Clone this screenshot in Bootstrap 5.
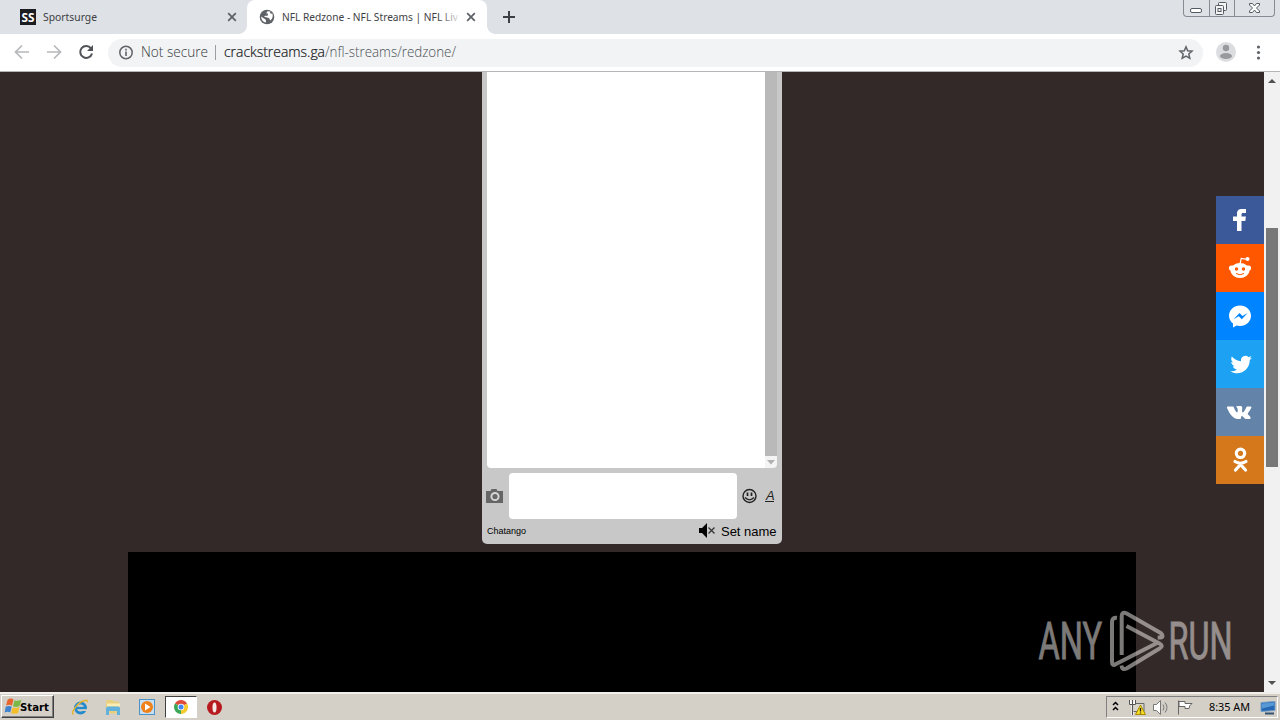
<!DOCTYPE html>
<html lang="en">
<head>
  <meta charset="UTF-8">
  <title>NFL Redzone - NFL Streams</title>
  <meta name="viewport" content="width=device-width, initial-scale=1">
  <link href="https://cdn.jsdelivr.net/npm/bootstrap@5.3.0/dist/css/bootstrap.min.css" rel="stylesheet">
  <style>
    body { width: 1280px; height: 720px; font-family: "DejaVu Sans Condensed", "DejaVu Sans", sans-serif; font-size: 11px; line-height: 1; color: #000; }
    svg { display: block; flex: none; overflow: visible; }
    svg text { white-space: pre; }

    /* browser chrome */
    .tab-strip { height: 34px; background: #dee1e6; }
    .tab-item { height: 34px; color: #3c4043; }
    .tab-first { width: 247px; padding-left: 20px; padding-right: 10px; }
    .tab-active { width: 240px; background: #fff; border-radius: 8px 8px 0 0; padding-left: 12px; padding-right: 11px; }
    .tab-active::before, .tab-active::after { content: ""; position: absolute; bottom: 0; width: 8px; height: 8px; }
    .tab-active::before { left: -8px; background: radial-gradient(circle at 0 0, transparent 7.5px, #fff 8px); }
    .tab-active::after { right: -8px; background: radial-gradient(circle at 100% 0, transparent 7.5px, #fff 8px); }
    .win-buttons { width: 92px; height: 17px; margin-right: 5px; border: 1px solid #868b93; border-top: 0; border-radius: 0 0 4px 4px; }
    .win-buttons > div + div { border-left: 1px solid #868b93; }
    .toolbar { height: 38px; background: #fff; border-bottom: 1px solid #b5b5b7; }
    .omnibox { width: 1095px; height: 28px; background: #f1f3f4; margin-left: 14px; padding-left: 11px; padding-right: 9px; }

    /* page */
    .viewport { height: 620px; background: #322928; }
    .page-area { width: 1264px; }
    .chat-box { width: 300px; height: 472px; background: #c8c8c8; border-radius: 0 0 5px 5px; padding: 0 5px; }
    .chat-log { height: 396px; background: #fff; border-radius: 0 0 4px 4px; }
    .chat-track { width: 12px; background: #b9b9b9; }
    .chat-down { height: 12px; background: #f4f4f4; border-radius: 0 0 3px 0; }
    .chat-entry { margin: 5px -1px 0; }
    .chat-input { width: 228px; height: 46px; background: #fff; border-radius: 4px; margin-left: 5px; flex: none; }
    .player { width: 1008px; height: 140px; margin-top: 8px; background: #000; }
    .share-bar { top: 124px; right: 0; width: 48px; }
    .share-bar > div { height: 48px; }
    .bg-fb { background: #3b5998; }
    .bg-reddit { background: #ff5700; }
    .bg-msgr { background: #0084ff; }
    .bg-tw { background: #1da1f2; }
    .bg-vk { background: #6383a8; }
    .bg-ok { background: #d4781b; }
    .watermark { left: 1030px; top: 532px; opacity: .5; }
    .scroll-col { width: 16px; background: #f1f1f1; }
    .scroll-thumb { width: 12px; height: 239px; background: #787878; margin-left: 2px; }

    /* taskbar */
    .taskbar { height: 28px; background: #d4d0c8; box-shadow: inset 0 2px #f1efea; padding: 3px 2px 0 1px; }
    .start-btn { width: 53px; height: 23px; border: 1px solid; border-color: #fff #404040 #404040 #fff; box-shadow: inset -1px -1px #808080; padding-left: 2px; }
    .task-active { width: 32px; height: 22px; margin-top: 1px; background: #fff; border: 1px solid; border-color: #404040 #fff #fff #404040; }
    .tray { width: 172px; height: 22px; margin-top: 1px; border: 1px solid; border-color: #808080 #fff #fff #808080; }
  </style>
</head>
<body class="d-flex flex-column overflow-hidden">

<!-- Tabs -->
<div class="tab-strip d-flex align-items-start">
  <div class="tab-item tab-first d-flex align-items-center">
    <svg width="16" height="16"><rect width="16" height="16" fill="#1c1d20"/><text x="1.5" y="12.5" font-family="Open Sans, sans-serif" font-weight="700" font-size="12" fill="#fff" textLength="13" lengthAdjust="spacingAndGlyphs">SS</text></svg>
    <svg class="ms-2" width="70" height="16"><text x="-1" y="12" font-family="Noto Sans, sans-serif" font-size="11.5" fill="#3c4043" textLength="54" lengthAdjust="spacingAndGlyphs">Sportsurge</text></svg>
    <svg class="ms-auto" width="10" height="10"><path d="M1.2 1.2l7.6 7.6M8.8 1.2L1.2 8.8" stroke="#5f6368" stroke-width="1.8"/></svg>
  </div>
  <div class="tab-item tab-active position-relative d-flex align-items-center">
    <svg width="16" height="16" viewBox="0 0 16 16"><circle cx="8" cy="8" r="7.3" fill="#5f6368"/><path d="M2 7.5l4.8 3.2.2 2.9C4.2 13.2 2.2 11 2 7.5zM8.5 2.2l-1.3 2 1.8.6-.3 2H6l-.8 1.2 2.3.2 2.6 1.1 1.2 2.3c2.3-1.7 3.1-4.6 2-7-1 .3-1.8-.2-2.3-.9l.4-1.1z" fill="#fff"/></svg>
    <svg class="ms-2" width="179" height="16">
      <defs><linearGradient id="fade" gradientUnits="userSpaceOnUse" x1="157" x2="179" y1="0" y2="0"><stop stop-color="#3c4043"/><stop offset="1" stop-color="#3c4043" stop-opacity="0"/></linearGradient></defs>
      <text x="-1" y="12" font-family="Noto Sans, sans-serif" font-size="11.5" fill="url(#fade)" textLength="176" lengthAdjust="spacingAndGlyphs">NFL Redzone - NFL Streams | NFL Liv</text>
    </svg>
    <svg class="ms-auto" width="10" height="10"><path d="M1.2 1.2l7.6 7.6M8.8 1.2L1.2 8.8" stroke="#5f6368" stroke-width="1.8"/></svg>
  </div>
  <svg class="ms-3 mt-2" width="13" height="18"><path d="M6 3v12M0 9h12" stroke="#3c4043" stroke-width="2"/></svg>
  <div class="win-buttons d-flex ms-auto">
    <div style="width:25px"><svg width="24" height="16"><rect x="6.5" y="8.5" width="11" height="4" rx="1.5" fill="#fff" stroke="#555b64"/></svg></div>
    <div style="width:25px"><svg width="24" height="16" fill="#f4f4f5" stroke="#555b64"><rect x="8.5" y="2.5" width="8" height="8" rx="1"/><rect x="5.500" y="5.500" width="8" height="9" rx="1"/><rect x="8" y="8.500" width="3" height="3"/></svg></div>
    <div class="flex-fill"><svg width="39" height="16"><path d="M14.500 3.500h3l2 2.500 2-2.500h3v1.500L21.500 8l3 3v1.500h-3l-2-2.500-2 2.500h-3V11l3-3-3-3z" fill="#fff" stroke="#555b64"/></svg></div>
  </div>
</div>

<!-- Address bar -->
<div class="toolbar d-flex align-items-center">
  <svg width="94" height="37" fill="none" stroke-width="1.700">
    <path d="M29 18H16M22 11.500L15.500 18l6.500 6.500M47 18h13M54 11.500l6.500 6.500-6.500 6.500" stroke="#b6b8ba"/>
    <path d="M91 14.300A6 6 0 1 0 92 19.500" stroke="#4f5357" stroke-width="2"/><path d="M93 11v6h-6z" fill="#4f5357"/>
  </svg>
  <div class="omnibox rounded-pill d-flex align-items-center justify-content-between">
    <svg width="350" height="28">
      <circle cx="7" cy="13.500" r="6.200" fill="none" stroke="#5f6368" stroke-width="1.500"/><path d="M7 9.700v1.700M7 12.500v4.500" stroke="#5f6368" stroke-width="1.600"/>
      <g font-family="Open Sans, sans-serif" font-size="14" font-weight="300">
        <text x="22" y="18" fill="#35393d" textLength="67" lengthAdjust="spacingAndGlyphs">Not secure</text>
        <path d="M96.500 6v15" stroke="#9a9da1"/>
        <text x="105" y="18" fill="#101113" stroke="#202124" stroke-width=".2" textLength="101" lengthAdjust="spacingAndGlyphs">crackstreams.ga</text>
        <text x="206" y="18" fill="#4c5055" textLength="131" lengthAdjust="spacingAndGlyphs">/nfl-streams/redzone/</text>
      </g>
    </svg>
    <svg width="16" height="16"><path d="M8 1.800l1.700 4 4.300.4L10.800 9l1 4.300L8 11.100l-3.800 2.200 1-4.300L2 6.200l4.300-.4z" fill="none" stroke="#5f6368" stroke-width="1.500"/></svg>
  </div>
  <svg class="ms-auto" width="66" height="37"><circle cx="12" cy="18" r="10" fill="#dcdde0"/><circle cx="12" cy="14" r="3.200" fill="#97999c"/><ellipse cx="12" cy="22" rx="6" ry="3" fill="#97999c"/><g fill="#5f6368"><circle cx="44.500" cy="13" r="1.600"/><circle cx="44.500" cy="18.500" r="1.600"/><circle cx="44.500" cy="24" r="1.600"/></g></svg>
</div>

<div class="viewport d-flex position-relative">
  <div class="page-area position-relative d-flex flex-column align-items-center">
    <!-- Chat -->
    <div class="chat-box">
      <div class="chat-log d-flex justify-content-end overflow-hidden">
        <div class="chat-track d-flex flex-column justify-content-end"><div class="chat-down"><svg width="12" height="12"><path d="M2 4h8l-4 4.500z" fill="#b0b0b0"/></svg></div></div>
      </div>
      <div class="chat-entry d-flex align-items-center">
        <svg width="18" height="16"><path d="M0 3h4.500l1-2h5l1 2H17v12H0z" fill="#666"/><circle cx="9" cy="8.500" r="3.600" fill="#666" stroke="#d4d4d4" stroke-width="2"/></svg>
        <div class="chat-input"></div>
        <svg width="41" height="20"><circle cx="12.500" cy="10" r="6.500" fill="none" stroke="#222" stroke-width="1.400"/><path d="M10.500 6.500v3.500M14.500 6.500v3.500" stroke="#222" stroke-width="1.700"/><path d="M8 11.500q4.500 4.500 9 0" fill="none" stroke="#222" stroke-width="1.200"/><text x="29" y="14" font-family="Liberation Sans, sans-serif" font-style="italic" font-size="13" fill="#222">A</text><path d="M28 15.500h9" stroke="#222"/></svg>
      </div>
      <svg width="292" height="24" font-family="Liberation Sans, sans-serif">
        <text x="0" y="15" font-size="9" textLength="39">Chatango</text>
        <path d="M212 9h3l5-5v15l-5-5h-3z"/><path d="M221.500 8.500l6 6M227.500 8.500l-6 6" stroke="#333" stroke-width="1.300"/>
        <text x="234" y="17" font-size="13" textLength="55.500">Set name</text>
      </svg>
    </div>
    <div class="player"></div>

    <!-- Share buttons -->
    <div class="share-bar position-absolute">
      <div class="bg-fb"><svg width="48" height="48"><path d="M21 35v-10h-4v-4.500h4v-2.700c0-3.500 2-4.800 5-4.800h4v4h-2.800c-1.200 0-1.700.6-1.700 1.700v1.800h4.400l-.6 4.500h-3.800v10z" fill="#fff"/></svg></div>
      <div class="bg-reddit"><svg width="48" height="48"><g fill="#fff"><ellipse cx="24" cy="26.500" rx="9.500" ry="7.500"/><circle cx="15.500" cy="24" r="2.600"/><circle cx="32.500" cy="24" r="2.600"/><circle cx="31.500" cy="15" r="2"/></g><path d="M24 20l1.200-5.500 6 .8" fill="none" stroke="#fff" stroke-width="1.200"/><circle cx="20.500" cy="25" r="1.700" fill="#ff5700"/><circle cx="27.500" cy="25" r="1.700" fill="#ff5700"/><path d="M20 29.500q4 2.500 8 0" stroke="#ff5700" fill="none"/></svg></div>
      <div class="bg-msgr"><svg width="48" height="48"><path d="M24 13.500c-6.200 0-11 4.500-11 10.300 0 3 1.500 5.800 4 7.800v4l3.700-2c1 .3 2.200.4 3.300.4 6.200 0 11-4.500 11-10.200S30.200 13.500 24 13.500z" fill="#fff"/><path d="M17.500 27.300l6-6.300 3 3 5.200-3-5.900 6.200-3-3z" fill="#0084ff"/></svg></div>
      <div class="bg-tw"><svg width="48" height="48"><path transform="translate(14 13.500) scale(.93)" d="M23.600 4.600c-.8.4-1.700.6-2.600.7 1-.6 1.700-1.500 2-2.500-.9.5-1.900.9-3 1.100A4.800 4.800 0 0 0 11.900 8.200C7.900 8 4.400 6.100 2 3.200c-1.300 2.200-.7 5 1.500 6.400-.8 0-1.500-.2-2.200-.6 0 2.300 1.600 4.300 3.800 4.700-.7.200-1.400.2-2.100.1.600 1.900 2.400 3.200 4.400 3.300A9.600 9.600 0 0 1 .4 19c9.200 5.900 21.100-.6 20.800-11.900 1-.7 1.800-1.500 2.400-2.500z" fill="#fff"/></svg></div>
      <div class="bg-vk"><svg width="48" height="48"><path d="M12.500 18.500h4c1 0 1.200.5 1.500 1.200 1 2.600 2.600 5.300 3.300 4.600.7-.6.500-3.800-.1-4.500-.3-.4-.8-.6-1.300-.7.600-1.100 2.400-1.200 4.500-1.100 2 .1 1.800.9 1.800 2.500-.1 1.500-.4 4 .5 4 1.200 0 2.800-3.500 3.600-5.200.3-.6.500-.8 1.200-.8h3c2.300 0-.2 3.300-2.400 6.500-.6.800-.4 1.200.2 1.800 2.400 2.200 3.400 4.200 1.200 4.200h-3.600c-1.600 0-2.700-3.100-4.100-3.100-.9 0-.5 1.500-.9 2.500-.3.700-1.500.8-3.300.6-4.500-.4-7.700-4.500-10.600-11-.3-.8-.1-1.500 1.500-1.500z" fill="#fff"/></svg></div>
      <div class="bg-ok"><svg width="48" height="48"><g fill="none" stroke="#fff" stroke-width="3.200" stroke-linecap="round"><circle cx="24.500" cy="17.300" r="4.200"/><path d="M19 25.500q5.500 3.500 11 0M24.500 28.500l-5 5.500M24.500 28.500l5 5.500"/></g></svg></div>
    </div>

    <!-- Watermark -->
    <svg class="watermark position-absolute" width="226" height="84" viewBox="1030 604 226 84">
      <g font-family="Roboto, sans-serif" font-size="51" fill="#f8f3ef" stroke="#f8f3ef" stroke-width=".8">
        <text x="1038.500" y="659" textLength="63.500" lengthAdjust="spacingAndGlyphs">ANY</text>
        <text x="1168.500" y="659" textLength="64" lengthAdjust="spacingAndGlyphs">RUN</text>
      </g>
      <g fill="none" stroke="#f8f3ef" stroke-width="4" stroke-linejoin="round">
        <path d="M1117 617.800q-5-.5-5 4.200v40q0 4.500 4 2l42-21.500"/>
        <path d="M1121.700 655v-38.500q0-5.500 5-3l34 19.500q3.500 3.500 0 4.500h-3"/>
        <path d="M1126.500 626l33 17.500q4.500 2.500 0 5l-33 20q-4.500 2-5-3"/>
      </g>
    </svg>
  </div>

  <div class="scroll-col d-flex flex-column">
    <svg width="16" height="156"><path d="M4 11h8L8 7z" fill="#505050"/></svg>
    <div class="scroll-thumb"></div>
    <svg class="mt-auto" width="16" height="17"><path d="M4 6h8l-4 4z" fill="#505050"/></svg>
  </div>
</div>

<!-- Taskbar -->
<div class="taskbar d-flex align-items-start">
  <div class="start-btn d-flex align-items-center">
    <svg width="50" height="20">
      <path d="M3.500 3q3-2.500 6-.5L8 8.500q-2.700-1.500-5.900 0z" fill="#e8642c"/><path d="M10.500 3.200q3 1.500 7-.5L15.500 9q-3 2-6.500.3z" fill="#7cb845"/><path d="M1.700 9.800q3-1.500 6-.3L6.200 15.500q-2.500-1.500-5.500 0z" fill="#3f83cf"/><path d="M8.700 10.200q3 1.500 6.800-.3L14 15.900q-3.500 1.800-7 .2z" fill="#f4bd2b"/>
      <text x="16" y="14" font-family="DejaVu Sans, sans-serif" font-size="11" font-weight="700" textLength="29" lengthAdjust="spacingAndGlyphs">Start</text>
    </svg>
  </div>
  <svg width="111" height="22">
    <!-- Internet Explorer -->
    <circle cx="26.500" cy="13" r="5" fill="none" stroke="#258acb" stroke-width="3"/><path d="M22 13h10" stroke="#258acb" stroke-width="2.400"/><path d="M29 16h5v-1.800h-5z" fill="#d4d0c8"/><path d="M19.500 19.500c-3-1 2-9 7.500-12.500 4-2.300 7-2.500 6 .3" fill="none" stroke="#e4b431" stroke-width="1.500"/>
    <!-- Explorer -->
    <path d="M52 6.500q0-1.500 1.500-1.500h5L60 6.500h5v12H52z" fill="#e9d080"/><path d="M53 8.500h13v3H53z" fill="#f8edb5"/><path d="M52 20v-6.500q0-2 2-2h10q2 0 2 2V20h-3v-4h-8v4z" fill="#62b2dd"/>
    <!-- Media Player -->
    <rect x="85.500" y="4.500" width="15" height="15" fill="#c5e0f5" stroke="#4d91c5"/><circle cx="93" cy="12" r="6" fill="#f08019"/><path d="M91 8.500v7l5.500-3.500z" fill="#fff"/>
  </svg>
  <div class="task-active d-flex align-items-center justify-content-center">
    <svg width="14" height="14" viewBox="0 0 14 14"><path d="M7 7L.94 3.500A7 7 0 0 1 13.060 3.500z" fill="#df4b3b"/><path d="M7 7V14A7 7 0 0 1 .94 3.500z" fill="#3aa757"/><path d="M7 7l6.060-3.500A7 7 0 0 1 7 14z" fill="#f6c92d"/><circle cx="7" cy="7" r="3.300" fill="#fff"/><circle cx="7" cy="7" r="2.500" fill="#4285f4"/></svg>
  </div>
  <svg class="ms-2" width="20" height="22"><circle cx="9.500" cy="12.500" r="7.500" fill="#b61a1f"/><ellipse cx="9.500" cy="12.500" rx="2" ry="5" fill="#f4e9e6"/></svg>
  <div class="tray ms-auto d-flex align-items-center">
    <svg width="170" height="20">
      <path d="M6 8l2.500-2.500L11 8M6 13l2.500-2.500L11 13" fill="none" stroke="#000" stroke-width="1.500"/>
      <path d="M26 6.500h11v8H26z" fill="#d8d5cd" stroke="#666"/><path d="M23.500 3v4h4V3M25.500 7v11" fill="none" stroke="#fff" stroke-width="2"/><path d="M22.500 3v4.500h6V3M25.500 3v15" fill="none" stroke="#555"/><path d="M33.500 8l5 9.500h-10z" fill="#f6dc23" stroke="#a78a00"/><path d="M33.500 11v3.500M33.500 15.500v1" stroke="#222" stroke-width="1.300"/>
      <path d="M46.500 7.500h3l4-4v14l-4-4h-3z" fill="#fff" stroke="#777"/><path d="M56 7.500q2 3 0 6M58 5.500q4 5 0 10" fill="none" stroke="#777"/>
      <path d="M71.500 3.500v14M72 4.500h6v2h7q-3 2-3 5h-4v-2h-6z" fill="#fff" stroke="#666"/>
      <text x="102" y="14" font-family="Noto Sans, sans-serif" font-size="11.500" textLength="41" lengthAdjust="spacingAndGlyphs">8:35 AM</text>
      <path d="M154 5.500l14-1v9l-14 1z" fill="#2468b3" stroke="#769fc8"/><path d="M155 6.500l12-1v3l-12 3z" fill="#5799d4"/><path d="M158 16.500h9" stroke="#31516f" stroke-width="2"/>
    </svg>
  </div>
</div>

<script src="https://cdn.jsdelivr.net/npm/bootstrap@5.3.0/dist/js/bootstrap.bundle.min.js"></script>
</body>
</html>
